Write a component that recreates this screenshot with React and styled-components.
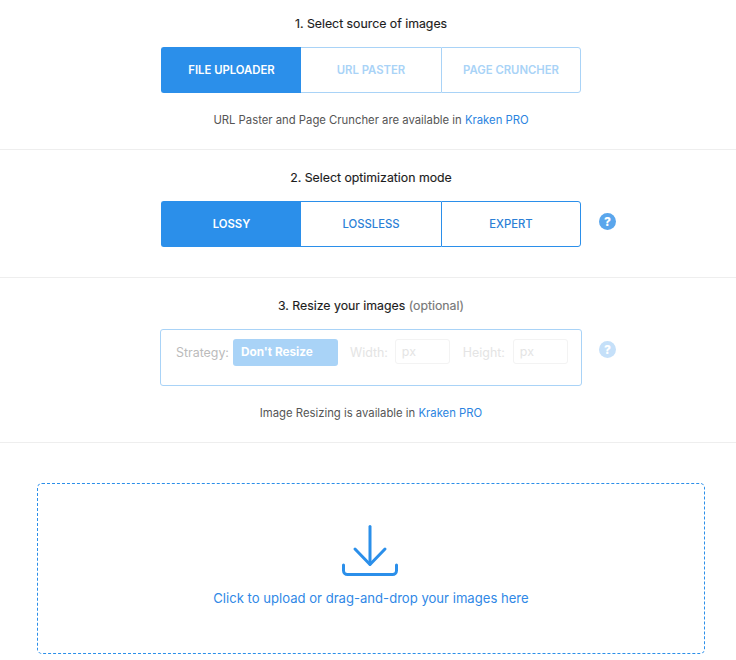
import React from "react";
import styled, { createGlobalStyle } from "styled-components";

const Global = createGlobalStyle`
  html, body { margin: 0; padding: 0; background: #fff; }
  body { font-family: "Inter", "Liberation Sans", sans-serif; color: #222; }
  * { box-sizing: border-box; }
`;

const BLUE = "#2b8fea";
const PALE = "#a9d3f7";

const Page = styled.div`
  width: 736px;
  height: 660px;
  overflow: hidden;
`;
const Section = styled.section`
  height: ${(p) => p.$h}px;
  padding: ${(p) => p.$top}px 0 0 6px;
  border-bottom: 1px solid #eee;
  display: flex;
  flex-direction: column;
  align-items: center;
`;
const Title = styled.h2`
  margin: 0;
  height: 17px;
  font-size: 12.3px;
  line-height: 17px;
  font-weight: 400;
  color: #1c1c1c;
  -webkit-text-stroke: 0.15px #1c1c1c;
`;
const Optional = styled.span`
  color: #777;
  -webkit-text-stroke: 0.15px #777;
`;
const Row = styled.div`
  position: relative;
  margin-top: 15px;
  width: 420px;
`;
const Group = styled.div`
  display: flex;
  height: 46px;
`;
const Tab = styled.div`
  width: 140px;
  flex: none;
  display: flex;
  align-items: center;
  justify-content: center;
  font-size: 11.3px;
  font-weight: ${(p) => (p.$active || p.$muted ? 600 : 500)};
  background: ${(p) => (p.$active ? BLUE : "#fff")};
  color: ${(p) => (p.$active ? "#fff" : p.$muted ? PALE : "#2b7fd6")};
  border: 1px solid ${(p) => (p.$active ? BLUE : p.$muted ? PALE : BLUE)};
  border-left-width: ${(p) => (p.$first || p.$last ? 1 : 0)}px;
  border-right-width: ${(p) => (p.$last ? 1 : 0)}px;
  border-radius: ${(p) => (p.$first ? "3px 0 0 3px" : p.$last ? "0 3px 3px 0" : "0")};
`;
const Note = styled.p`
  margin: 20px 0 0;
  font-size: 11.3px;
  line-height: 14px;
  color: #555;
`;
const ProLink = styled.a`
  color: #2b84e0;
`;
const Help = styled.div`
  position: absolute;
  left: 438px;
  top: 12px;
  width: 17px;
  height: 17px;
  border-radius: 50%;
  background: ${(p) => (p.$muted ? "#c5e0f9" : "#5aa6ec")};
  color: #fff;
  font-size: 12px;
  font-weight: 800;
  line-height: 17px;
  text-align: center;
`;
const ResizeBox = styled.div`
  width: 422px;
  height: 57px;
  margin-left: -1px;
  border: 1px solid ${PALE};
  border-radius: 3px;
  padding: 9px 0 0 15px;
  display: flex;
  align-items: flex-start;
  font-size: 12.4px;
`;
const FieldLabel = styled.span`
  height: 27px;
  line-height: 27px;
  color: ${(p) => (p.$strong ? "#bbb" : "#e4e4e4")};
  margin-left: ${(p) => p.$ml || 0}px;
`;
const Select = styled.div`
  width: 105px;
  height: 27px;
  margin-left: 4px;
  background: ${PALE};
  border-radius: 3px;
  color: #fff;
  font-size: 11.8px;
  font-weight: 700;
  line-height: 27px;
  padding-left: 8px;
`;
const Input = styled.div`
  width: 55px;
  height: 25px;
  margin-left: ${(p) => p.$ml}px;
  border: 1px solid #f3f3f3;
  border-radius: 3px;
  color: #e4e4e4;
  line-height: 23px;
  padding-left: 6px;
`;
const DropWrap = styled.div`
  padding: 40px 31px 0 37px;
`;
const Drop = styled.div`
  height: 171px;
  border: 1px dashed ${BLUE};
  border-radius: 5px;
  display: flex;
  flex-direction: column;
  align-items: center;
  padding-top: 41px;
`;
const DropText = styled.div`
  margin-top: 13px;
  font-size: 13.1px;
  line-height: 18px;
  color: #3088e6;
`;
const IconSvg = styled.svg`
  margin-right: 3px;
  flex: none;
`;

const Section1 = () => (
  <Section $h={150} $top={15}>
    <Title>1. Select source of images</Title>
    <Row>
      <Group>
        <Tab $first $active>FILE UPLOADER</Tab>
        <Tab $muted>URL PASTER</Tab>
        <Tab $last $muted>PAGE CRUNCHER</Tab>
      </Group>
    </Row>
    <Note>URL Paster and Page Cruncher are available in <ProLink>Kraken PRO</ProLink></Note>
  </Section>
);

const Section2 = () => (
  <Section $h={128} $top={19}>
    <Title>2. Select optimization mode</Title>
    <Row>
      <Group>
        <Tab $first $active>LOSSY</Tab>
        <Tab>LOSSLESS</Tab>
        <Tab $last>EXPERT</Tab>
      </Group>
      <Help>?</Help>
    </Row>
  </Section>
);

const Section3 = () => (
  <Section $h={165} $top={19}>
    <Title>3. Resize your images <Optional>(optional)</Optional></Title>
    <Row>
      <ResizeBox>
        <FieldLabel $strong>Strategy:</FieldLabel>
        <Select>Don't Resize</Select>
        <FieldLabel $ml={12}>Width:</FieldLabel>
        <Input $ml={7}>px</Input>
        <FieldLabel $ml={13}>Height:</FieldLabel>
        <Input $ml={8}>px</Input>
      </ResizeBox>
      <Help $muted>?</Help>
    </Row>
    <Note>Image Resizing is available in <ProLink>Kraken PRO</ProLink></Note>
  </Section>
);

const UploadIcon = () => (
  <IconSvg width="56" height="51" viewBox="0 0 56 51" fill="none" stroke={BLUE} strokeWidth="3" strokeLinecap="round" strokeLinejoin="round">
    <path d="M28 1.5V39" />
    <path d="M13 24L28 39.5L43 24" />
    <path d="M1.5 40V45.5a4 4 0 0 0 4 4H50.5a4 4 0 0 0 4-4V40" />
  </IconSvg>
);

export default function App() {
  return (
    <Page>
      <Global />
      <Section1 />
      <Section2 />
      <Section3 />
      <DropWrap>
        <Drop>
          <UploadIcon />
          <DropText>Click to upload or drag-and-drop your images here</DropText>
        </Drop>
      </DropWrap>
    </Page>
  );
}
